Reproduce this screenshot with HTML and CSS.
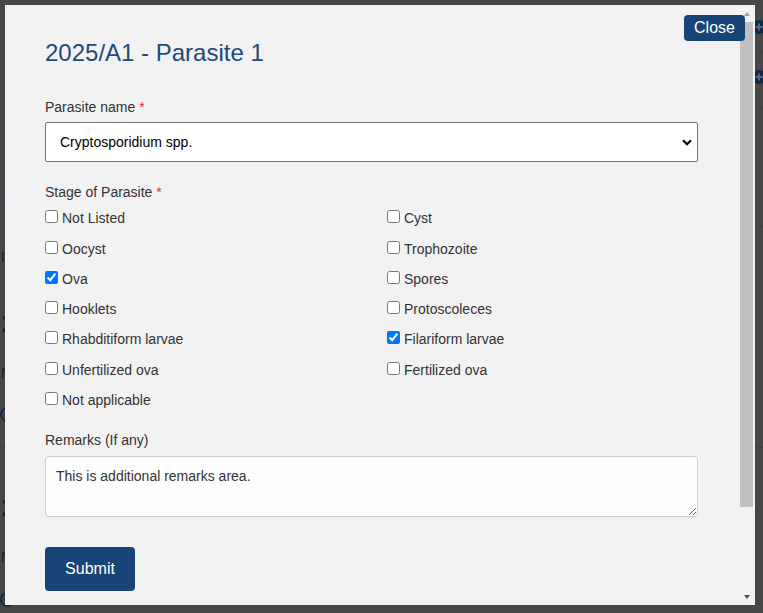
FILE: index.html
```html
<!DOCTYPE html>
<html lang="en">
<head>
<meta charset="utf-8">
<title>2025/A1 - Parasite 1</title>
<link rel="stylesheet" href="styles.css">
</head>
<body>
<div class="page">
  <div class="pg-row r1">
    <svg class="pg-plus p1" width="14" height="14" viewBox="0 0 14 14"><circle cx="7" cy="7" r="7" fill="#102a45"/><path d="M7 3.5v7M3.5 7h7" stroke="#5b6673" stroke-width="2"/></svg>
  </div>
  <div class="pg-row r2">
    <svg class="pg-plus p2" width="14" height="14" viewBox="0 0 14 14"><circle cx="7" cy="7" r="7" fill="#102a45"/><path d="M7 3.5v7M3.5 7h7" stroke="#5b6673" stroke-width="2"/></svg>
  </div>
  <div class="pg-row r3"><div class="pg-tab"></div></div>
  <div class="pg-row r4">
    <div class="pg-text t1">Info</div>
    <div class="pg-head h1">20</div>
    <div class="pg-text t2">No</div>
    <div class="pg-enter e1"><svg width="15" height="15" viewBox="0 0 15 15"><circle cx="7.5" cy="7.5" r="6.5" fill="none" stroke="#102a45" stroke-width="2"/><path d="M7.5 4v7M4 7.5h7" stroke="#102a45" stroke-width="2"/></svg></div>
  </div>
  <div class="pg-row r5">
    <div class="pg-head h2">20</div>
    <div class="pg-text t3">No</div>
    <div class="pg-enter e2"><svg width="15" height="15" viewBox="0 0 15 15"><circle cx="7.5" cy="7.5" r="6.5" fill="none" stroke="#102a45" stroke-width="2"/><path d="M7.5 4v7M4 7.5h7" stroke="#102a45" stroke-width="2"/></svg><span>Enter results</span></div>
  </div>
</div>

<div class="modal">
  <div class="modal-body">
    <h2 class="title">2025/A1 - Parasite 1</h2>

    <div class="group">
      <label class="label">Parasite name <span class="req">*</span></label>
      <div class="select-wrap">
        <select class="select"><option>Cryptosporidium spp.</option></select>
        <svg class="chev" width="10" height="7" viewBox="0 0 10 7"><path d="M1 1.3L5 5.2L9 1.3" fill="none" stroke="#000" stroke-width="2.2"/></svg>
      </div>
    </div>

    <div class="group">
      <label class="label stage">Stage of Parasite <span class="req">*</span></label>
      <div class="checks">
        <label class="check"><input type="checkbox">Not Listed</label>
        <label class="check"><input type="checkbox">Cyst</label>
        <label class="check"><input type="checkbox">Oocyst</label>
        <label class="check"><input type="checkbox">Trophozoite</label>
        <label class="check"><input type="checkbox" checked>Ova</label>
        <label class="check"><input type="checkbox">Spores</label>
        <label class="check"><input type="checkbox">Hooklets</label>
        <label class="check"><input type="checkbox">Protoscoleces</label>
        <label class="check"><input type="checkbox">Rhabditiform larvae</label>
        <label class="check"><input type="checkbox" checked>Filariform larvae</label>
        <label class="check"><input type="checkbox">Unfertilized ova</label>
        <label class="check"><input type="checkbox">Fertilized ova</label>
        <label class="check"><input type="checkbox">Not applicable</label>
      </div>
    </div>

    <div class="group remarks">
      <label class="label remarks-label">Remarks (If any)</label>
      <textarea class="textarea">This is additional remarks area.</textarea>
    </div>

    <button class="submit" type="button">Submit</button>
  </div>

  <div class="scrollbar">
    <div class="sb-btn"><span class="arrow-up"></span></div>
    <div class="sb-thumb"></div>
    <div class="sb-space"></div>
    <div class="sb-btn"><span class="arrow-down"></span></div>
  </div>

  <button class="close" type="button">Close</button>
</div>
</body>
</html>
```
FILE: styles.css
```css
html, body {
  margin: 0;
  padding: 0;
}
body {
  background: #474747;
  font-family: "Liberation Sans", Arial, sans-serif;
  height: 613px;
  overflow: hidden;
}

.page {
  width: 763px;
}
.pg-row {
  box-sizing: border-box;
  border-bottom: 1px solid #3e3e3e;
  display: flex;
  flex-direction: column;
  padding-left: 1px;
}
.r1 { height: 53px; }
.r2 { height: 55px; }
.r3 { height: 119px; }
.r4 { height: 221px; }
.r5 { height: 165px; border-bottom: 0; }
.pg-plus {
  align-self: flex-end;
  margin-right: -3px;
}
.p1 { margin-top: 20px; }
.p2 { margin-top: 17px; }
.pg-tab {
  margin-top: 94px;
  width: 60px;
  height: 3px;
  background: #2a4a6a;
}
.pg-text {
  font-size: 14px;
  line-height: 20px;
  color: #1c1c1c;
}
.pg-head {
  font-size: 24px;
  line-height: 29px;
  color: #15253a;
}
.pg-enter {
  display: flex;
  align-items: center;
  gap: 5px;
  height: 16px;
  font-size: 16px;
  line-height: 16px;
  color: #1c1c1c;
  margin-left: -1px;
}
.t1 { margin-top: 20px; }
.h1 { margin-top: 42px; }
.t2 { margin-top: 25px; }
.e1 { margin-top: 23px; }
.h2 { margin-top: 45px; }
.t3 { margin-top: 25px; }
.e2 { margin-top: 24px; }

/* modal */
.modal {
  position: fixed;
  left: 5px;
  top: 5px;
  width: 750px;
  height: 600px;
  background: #f2f2f2;
  display: flex;
  overflow: hidden;
}
.modal-body {
  flex: 1;
  min-width: 0;
  padding: 33px 40px 0;
}
.title {
  margin: 0 0 30px;
  font-size: 24px;
  line-height: 29px;
  font-weight: normal;
  color: #1c4a7c;
}
.label {
  display: block;
  font-size: 14px;
  line-height: 20px;
  color: #333;
  margin-bottom: 5px;
}
.stage { margin-bottom: 6.3px; }
.remarks-label { margin-bottom: 5.5px; }
.req { color: #f22; }
.group { margin-bottom: 20px; }
.group.remarks { margin-bottom: 30px; }

.select-wrap { position: relative; }
.select {
  display: block;
  width: 100%;
  height: 40px;
  box-sizing: border-box;
  margin: 0;
  -webkit-appearance: none;
  appearance: none;
  background: #fff;
  border: 1px solid #767676;
  border-radius: 2px;
  padding: 0 30px 0 14px;
  font: 14px "Liberation Sans", Arial, sans-serif;
  color: #000;
}
.chev {
  position: absolute;
  right: 6px;
  top: 17px;
}

.checks {
  display: grid;
  grid-template-columns: 342px 1fr;
  row-gap: 10.3px;
}
.check {
  display: block;
  font-size: 14px;
  line-height: 20px;
  color: #333;
  white-space: nowrap;
}
.check input {
  width: 13px;
  height: 13px;
  margin: 0 4px 0 0;
  vertical-align: baseline;
}

.textarea {
  display: block;
  width: 100%;
  height: 61px;
  box-sizing: border-box;
  margin: 0;
  border: 1px solid #cccccc;
  border-radius: 4px;
  padding: 9px 10px;
  font: 14px/20px "Liberation Sans", Arial, sans-serif;
  color: #333;
  background: #fdfdfd;
  resize: vertical;
}

.submit {
  display: block;
  width: 90px;
  height: 44px;
  padding: 0;
  border: 0;
  border-radius: 4px;
  background: #174475;
  color: #fff;
  font: 16px "Liberation Sans", Arial, sans-serif;
}

.close {
  position: absolute;
  top: 10px;
  right: 10px;
  width: 61px;
  height: 26px;
  padding: 0;
  border: 0;
  border-radius: 4px;
  background: #174475;
  color: #fff;
  font: 16px/26px "Liberation Sans", Arial, sans-serif;
}

/* fake scrollbar */
.scrollbar {
  width: 17px;
  display: flex;
  flex-direction: column;
  align-items: center;
}
.sb-btn {
  width: 17px;
  height: 17px;
  display: flex;
  align-items: center;
  justify-content: center;
}
.arrow-up {
  width: 0;
  height: 0;
  border-left: 3.5px solid transparent;
  border-right: 3.5px solid transparent;
  border-bottom: 4px solid #a3a3a3;
}
.arrow-down {
  width: 0;
  height: 0;
  border-left: 3.5px solid transparent;
  border-right: 3.5px solid transparent;
  border-top: 4px solid #505050;
}
.sb-thumb {
  width: 13px;
  height: 485px;
  background: #c1c1c1;
}
.sb-space { flex: 1; }
```
